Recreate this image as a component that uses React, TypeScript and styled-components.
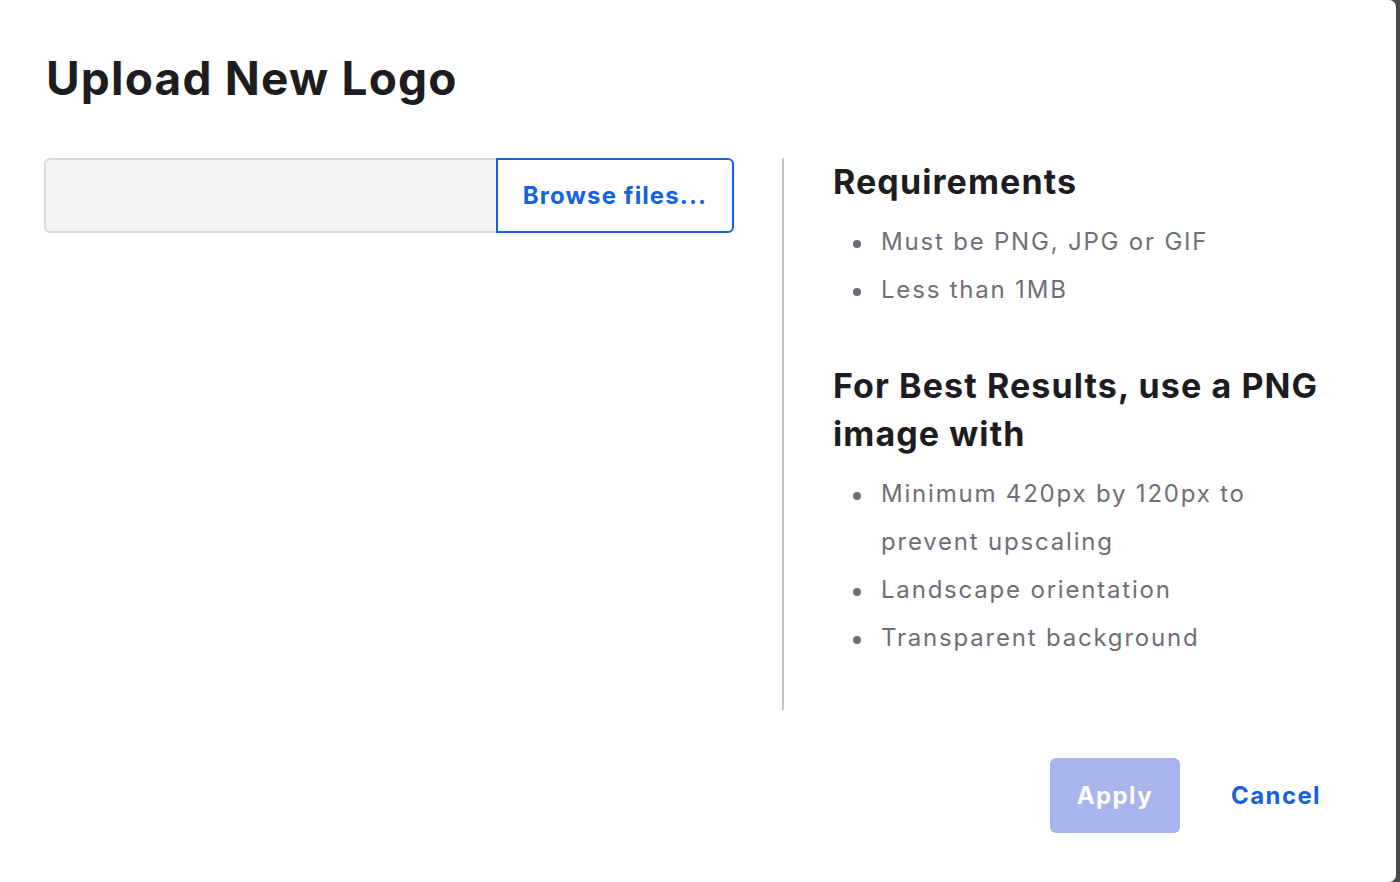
import React from "react";
import styled, { createGlobalStyle } from "styled-components";

const Global = createGlobalStyle`
  html, body { margin: 0; padding: 0; background: #4a4a4c; }
  body { font-family: Inter, "Noto Sans", sans-serif; -webkit-font-smoothing: antialiased; }
  * { box-sizing: border-box; }
`;

const Modal = styled.div`
  width: 1396px;
  height: 882px;
  background: #ffffff;
  border-radius: 0 7px 7px 0;
  padding: 0 48px 0 46px;
  display: flex;
  flex-direction: column;
`;

const Title = styled.h1`
  margin: 48px 0 0;
  font-size: 46px;
  line-height: 60px;
  font-weight: 700;
  color: #1d1d21;
  letter-spacing: 1.2px;
`;

const Body = styled.div`
  margin-top: 50px;
  display: grid;
  grid-template-columns: 690px 2px 1fr;
  column-gap: 48px;
  margin-left: -2px;
`;

const FileField = styled.div`
  display: flex;
  height: 75px;
`;

const FileInput = styled.div`
  flex: 1;
  background: #f4f4f4;
  border: 2px solid #d8d8dc;
  border-right: none;
  border-radius: 6px 0 0 6px;
`;

const BrowseButton = styled.button`
  width: 238px;
  height: 75px;
  border: 2px solid #1662dd;
  border-radius: 0 6px 6px 0;
  background: #ffffff;
  color: #1662dd;
  font-family: inherit;
  font-size: 24px;
  font-weight: 700;
  letter-spacing: 1.1px;
  padding: 0;
  cursor: pointer;
`;

const Divider = styled.div`
  width: 2px;
  height: 552px;
  background: #c4c3ca;
`;

const Info = styled.div`
  padding-left: 1px;
`;

const Heading = styled.h2<{ $gapTop?: number }>`
  margin: ${(p) => p.$gapTop ?? 0}px 0 0;
  font-size: 34px;
  line-height: 48px;
  font-weight: 700;
  letter-spacing: 1.1px;
  color: #1d1d21;
`;

const List = styled.ul`
  margin: 12px 0 0;
  padding: 0 0 0 48px;
  list-style: none;
`;

const Item = styled.li`
  position: relative;
  font-size: 24px;
  line-height: 48px;
  letter-spacing: 1.8px;
  color: #6e6e78;
  padding-right: 40px;

  &::before {
    content: "";
    position: absolute;
    left: -28px;
    top: 22px;
    width: 8px;
    height: 8px;
    border-radius: 50%;
    background: #6e6e78;
  }
`;

const Footer = styled.div`
  margin-top: 48px;
  display: flex;
  justify-content: flex-end;
  gap: 24px;
`;

const Button = styled.button<{ $variant: "primary" | "link" }>`
  height: 75px;
  padding: 0 27px;
  border: none;
  border-radius: 6px;
  font-family: inherit;
  font-size: 24px;
  font-weight: 700;
  letter-spacing: 1.4px;
  cursor: pointer;
  background: ${(p) => (p.$variant === "primary" ? "#a7b5ec" : "transparent")};
  color: ${(p) => (p.$variant === "primary" ? "#ffffff" : "#1662dd")};
`;

export default function App() {
  return (
    <>
      <Global />
      <Modal>
        <Title>Upload New Logo</Title>
        <Body>
          <FileField>
            <FileInput />
            <BrowseButton>Browse files...</BrowseButton>
          </FileField>
          <Divider />
          <Info>
            <Heading>Requirements</Heading>
            <List>
              <Item>Must be PNG, JPG or GIF</Item>
              <Item>Less than 1MB</Item>
            </List>
            <Heading $gapTop={48}>For Best Results, use a PNG image with</Heading>
            <List>
              <Item>Minimum 420px by 120px to prevent upscaling</Item>
              <Item>Landscape orientation</Item>
              <Item>Transparent background</Item>
            </List>
          </Info>
        </Body>
        <Footer>
          <Button $variant="primary">Apply</Button>
          <Button $variant="link">Cancel</Button>
        </Footer>
      </Modal>
    </>
  );
}
